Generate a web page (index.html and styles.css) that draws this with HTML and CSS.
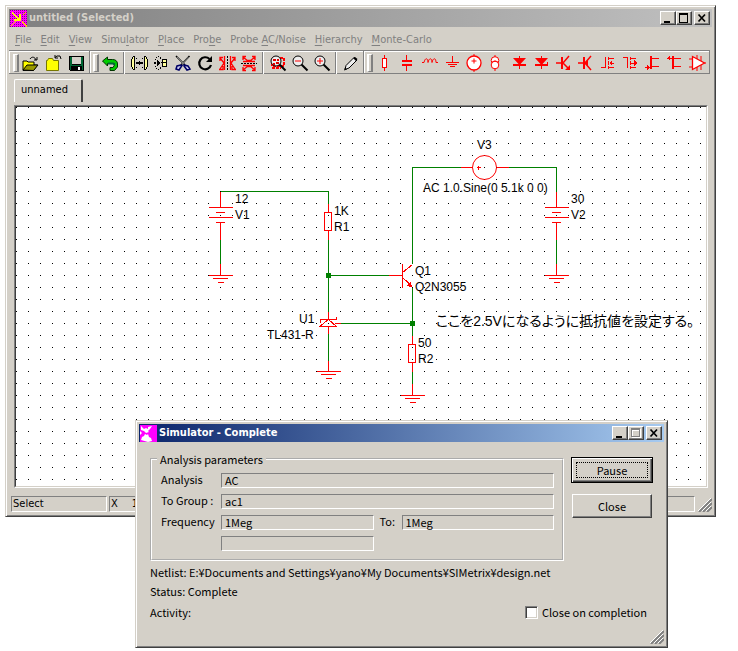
FILE: index.html
```html
<!DOCTYPE html>
<html lang="en">
<head>
<meta charset="utf-8">
<title>untitled (Selected)</title>
<link rel="stylesheet" href="styles.css">
</head>
<body>
<div class="desktop">
<main class="window">
  <header class="titlebar inactive">
    <svg class="app-icon" width="17" height="17" viewBox="0 0 17 17" shape-rendering="crispEdges">
      <defs><pattern id="weave" width="2" height="2" patternUnits="userSpaceOnUse"><rect width="2" height="2" fill="#f0f"/><rect width="1" height="1" fill="#808"/></pattern></defs>
      <rect width="17" height="17" fill="url(#weave)"/>
      <path d="M2 2h1v1h1v1h1v1h1v1h1v1h1v1h1V4h2v7H4V9h3V8H6V7H5V6H4V5H3V4H2z" fill="#ff0"/>
      <path d="M12 11h1v1h1v1h1v1h1v1h1v2h-1v-1h-1v-1h-1v-1h-1v-1h-1zM5 11h1v1H5zM4 12h1v1H4zM3 13h1v1H3zM2 14h1v1H2zM1 15h1v1H1zM13 4h1v1h-1zM14 3h1v1h-1zM15 2h1v1h-1z" fill="#fc0"/>
    </svg>
    <h1>untitled (Selected)</h1>
    <div class="caption-buttons">
      <button aria-label="Minimize"><svg width="12" height="10" shape-rendering="crispEdges"><path d="M2 8h6v2H2z"/></svg></button>
      <button aria-label="Maximize"><svg width="12" height="10" shape-rendering="crispEdges"><path d="M1 0h9v10H1zM2 2v7h7V2z" fill-rule="evenodd"/></svg></button>
      <button class="apart" aria-label="Close window"><svg width="12" height="10"><path d="M2.500 1.500l6.500 7M9 1.500l-6.500 7" stroke="#000" stroke-width="1.700"/></svg></button>
    </div>
  </header>
  <nav class="menubar">
    <button><u>F</u>ile</button><button><u>E</u>dit</button><button><u>V</u>iew</button><button>Simu<u>l</u>ator</button><button><u>P</u>lace</button><button>Pro<u>b</u>e</button><button>Probe <u>A</u>C/Noise</button><button><u>H</u>ierarchy</button><button><u>M</u>onte-Carlo</button>
  </nav>
  <div class="toolbar">
    <div class="band files">
      <span class="grip"></span>
      <button aria-label="Open"><svg viewBox="0 0 20 18"><path d="M3 16V7h4l1 1h6v3h3.500l-4 5.500H3z" fill="#ff0" stroke="#000"/><path d="M3 16l4-5h11l-4.500 5.500z" fill="#990" stroke="#000"/><path d="M10 5c2-3 5-2 6 1M14 6h3V3" fill="none" stroke="#000"/></svg></button>
      <button aria-label="Close schematic"><svg viewBox="0 0 20 18"><path d="M3.500 16.500v-10h1l1-2h4l1 2h5v10z" fill="#ff0" stroke="#770"/><path d="M12 3.500l2-1.500h3l1 3M12 1v3h3" fill="none" stroke="#000"/></svg></button>
      <button aria-label="Save"><svg viewBox="0 0 20 18" class="px"><path d="M3 2h15v15H4l-1-1z"/><path d="M4 3h2v8h9V3h2v13h-1v-4H5v4H4z" fill="#063"/><path d="M6 3h9v7H6z" fill="#d4d0c8"/><path d="M12 13h2v3h-2z" fill="#fff"/></svg></button>
    </div>
    <div class="band">
      <span class="grip"></span>
      <button aria-label="Undo"><svg viewBox="0 0 20 18"><path d="M2.500 7l5-4v2.500h5c3 0 5 1.500 5 4.500v3l-3 3.500H10v-3h3l1.500-2.500c0-1-1-1.500-2-1.500h-5V12z" fill="#0c0" stroke="#030"/><path d="M8 9.500h5l2 1" stroke="#063" fill="none" stroke-width="2"/></svg></button>
      <span class="rule"></span>
      <button aria-label="Mirror copy"><svg viewBox="0 0 20 18" class="px"><path d="M5.500 2.500h-1l-2 3v7l2 3h1zM15.500 2.500h1l2 3v7l-2 3h-1z" fill="#ff9" stroke="#000"/><path d="M7 4h1v1H7zM7 13h1v1H7zM13 4h1v1h-1zM13 13h1v1h-1zM7 8h2v2H7zM12 8h2v2h-2zM10 7h1v4h-1zM9 8h3v2H9z"/></svg></button>
      <button aria-label="Copy into"><svg viewBox="0 0 20 18" class="px"><path d="M3 8h2v2H3zM6 6h1v6H6zM7 7h1v4H7zM8 8h1v2H8zM7 2h1v1H7zM5 3h1v1H5zM4 5h1v1H4zM4 12h1v1H4zM5 14h1v1H5zM7 15h1v1H7zM9 3h1v2H9zM9 13h1v2H9z"/><path d="M11.500 5.500h4v7h-4z" fill="#ff9" stroke="#000"/><path d="M10 8h6v1h-6z"/></svg></button>
      <button aria-label="Cut"><svg viewBox="0 0 20 18"><path d="M3 2l9 9M16.500 2L8 11" stroke="#000" stroke-width="1.500"/><path d="M4 3l7 7M15.500 3L9 10" stroke="#fff" stroke-width=".5"/><path d="M8 11l-4 1-1 3 3 1 3-4.500zM11 11l4 1 2 3-3 1-3-4z" fill="#cce" stroke="#006" stroke-width="1.500"/></svg></button>
      <button aria-label="Rotate"><svg viewBox="0 0 20 18"><path d="M14.500 5A6 6 0 1 0 16 11" fill="none" stroke="#000" stroke-width="2.200"/><path d="M17 2v6h-6z"/></svg></button>
      <button aria-label="Flip horizontally"><svg viewBox="0 0 20 18"><path d="M10.500 2v15" stroke="#000" stroke-dasharray="2 1"/><path d="M7.500 2v14M13.500 2v14M7 9L3 4M7 9l-4 6M14 9l4-5M14 9l4 6M3 7V3.500h3M18 7V3.500h-3M2 15.500h4V12M19 15.500h-4V12" stroke="#f00" fill="none" stroke-width="1.300"/></svg></button>
      <button aria-label="Flip vertically"><svg viewBox="0 0 20 18"><path d="M2 9.500h16" stroke="#000" stroke-dasharray="2 1"/><path d="M4 7.500h12M4 11.500h12M8 6.500h5M8 12.500h5M9 7L4 3M11 7l5-4M9 12l-5 4M11 12l5 4M4 6V2.500h3M16 6V2.500h-3M4 13v3.500h3M16 13v3.500h-3" stroke="#f00" fill="none" stroke-width="1.300"/></svg></button>
      <span class="rule"></span>
      <button aria-label="Zoom to fit"><svg viewBox="0 0 20 18"><path d="M4 4h12v8H4z" fill="none" stroke="#f00" stroke-width="2" stroke-dasharray="3 1"/><circle cx="8" cy="7" r="5" fill="#eee" stroke="#000"/><path d="M5 5h3v2H5zM9 5h2v2H9zM5 9h2v2H5zM8 8h3v2H8z" fill="#d00"/><path d="M11.500 10.500l6 6" stroke="#000" stroke-width="2"/><path d="M4 14h9" stroke="#f00" stroke-width="2" stroke-dasharray="3 1"/></svg></button>
      <button aria-label="Zoom out"><svg viewBox="0 0 20 18"><circle cx="8" cy="7" r="5" fill="#eee" stroke="#000"/><path d="M5 7h6" stroke="#f00"/><path d="M11.500 10.500l6 6" stroke="#000" stroke-width="2"/></svg></button>
      <button aria-label="Zoom in"><svg viewBox="0 0 20 18"><circle cx="8" cy="7" r="5" fill="#eee" stroke="#000"/><path d="M5 7h6M8 4v6" stroke="#f00"/><path d="M11.500 10.500l6 6" stroke="#000" stroke-width="2"/></svg></button>
      <span class="rule"></span>
      <button aria-label="Draw wire"><svg viewBox="0 0 20 18"><path d="M4 15.500l1-4 8-8 3 2.500-8 8z" fill="#eee" stroke="#000"/><path d="M12 4l3 3 1.500-2-2.500-2zM3 16.500l1-3 2 2z"/></svg></button>
    </div>
    <div class="band parts">
      <span class="grip"></span>
      <button aria-label="Resistor"><svg viewBox="0 0 20 18" class="px"><path d="M10.500 1v3M10.500 14v3" stroke="#f00"/><path d="M8.500 4.500h4v9h-4z" fill="#fff" stroke="#f00"/></svg></button>
      <button aria-label="Capacitor"><svg viewBox="0 0 20 18" class="px"><path d="M10 1h1v5h5v2H6V6h4zM6 10h10v2h-5v5h-1v-5H6z" fill="#f00"/></svg></button>
      <span class="space"></span>
      <button aria-label="Inductor"><svg viewBox="0 0 20 18"><path d="M2 8.500h2c1-5 4-5 4 0 1-5 4-5 4 0 1-5 4-5 4 0h2" fill="none" stroke="#f00"/></svg></button>
      <button aria-label="Ground"><svg viewBox="0 0 20 18" class="px"><path d="M10 2h1v6h6v1H4V8h6zM6 10h9v1H6zM8 12h5v1H8z" fill="#f00"/></svg></button>
      <button aria-label="Voltage source"><svg viewBox="0 0 20 18"><circle cx="10" cy="9" r="7" fill="#fff" stroke="#f00" stroke-width="1.300"/><path d="M7.500 7h5M10 4.500v5M10 0v2M10 16v2" stroke="#f00"/></svg></button>
      <button aria-label="Current source"><svg viewBox="0 0 20 18"><path d="M9 1v16" stroke="#f00"/><circle cx="9" cy="6.500" r="3.800" fill="#fff" stroke="#f00"/><circle cx="9" cy="11" r="3.800" fill="#fff" stroke="#f00"/><path d="M6 8.500c2-2 4-2 6 0" stroke="#f00" fill="none"/></svg></button>
      <span class="space"></span>
      <button aria-label="Diode"><svg viewBox="0 0 20 18"><path d="M3 4h13l-5.500 6H16v2H3v-2h5.500z" fill="#f00"/><path d="M9.500 2v13" stroke="#f00"/></svg></button>
      <button aria-label="Zener diode"><svg viewBox="0 0 20 18"><path d="M3 4h13l-5.500 6H15V8h1v4H3v-2h5.500z" fill="#f00"/><path d="M9.500 2v13" stroke="#f00"/></svg></button>
      <button aria-label="NPN transistor"><svg viewBox="0 0 20 18"><path d="M2 9h6M9 9l6-7M9 9l6 6" stroke="#f00" stroke-width="1.500"/><path d="M7 3h2v12H7zM16 16h-5l5-5z" fill="#f00"/></svg></button>
      <button aria-label="PNP transistor"><svg viewBox="0 0 20 18"><path d="M2 9h6M9 9l6-7M9 9l6 7" stroke="#f00" stroke-width="1.500"/><path d="M7 3h2v12H7zM8 9l4-3v6z" fill="#f00"/></svg></button>
      <button aria-label="N MOSFET"><svg viewBox="0 0 20 18" class="px"><path d="M7.500 3v11M3 13.500h5M10.500 3v3M10.500 7v4M10.500 12v3M11 4.500h5M11 13.500h5M12 9h4" fill="none" stroke="#f00"/><path d="M11 9l3-3v6z" fill="#f00"/></svg></button>
      <button aria-label="P MOSFET"><svg viewBox="0 0 20 18" class="px"><path d="M7.500 3v11M3 3.500h5M10.500 3v3M10.500 7v4M10.500 12v3M11 4.500h5M11 13.500h5M10 9h5" fill="none" stroke="#f00"/><path d="M17 9l-3-3v6z" fill="#f00"/></svg></button>
      <button aria-label="N JFET"><svg viewBox="0 0 20 18" class="px"><path d="M8 2h2v13H8zM10 4h7v1h-7zM10 12h7v1h-7zM3 13h5v1H3zM5 11l3 2.500-3 2.500z" fill="#f00"/></svg></button>
      <button aria-label="P JFET"><svg viewBox="0 0 20 18" class="px"><path d="M8 2h2v13H8zM10 4h7v1h-7zM10 12h7v1h-7zM3 4h5v1H3zM3 4l3-3v6z" fill="#f00"/></svg></button>
      <span class="space"></span>
      <button aria-label="Amplifier"><svg viewBox="0 0 20 18"><path d="M1 5h4M1 13h4M9 1v16M13 2v14M15 9h3" stroke="#f00"/><path d="M4.500 2.500L16.500 9 4.500 15.500z" fill="#fff" stroke="#f00" stroke-width="1.300"/></svg></button>
    </div>
  </div>
  <div class="tabs"><button class="tab">unnamed</button></div>
  <div class="sheet">
    <svg class="schematic" width="100%" height="100%">
      <defs>
        <pattern id="grid" width="12" height="12" patternUnits="userSpaceOnUse"><rect width="1" height="1"/></pattern>
        <g id="ground"><path d="M-12 0H12M-8 3H7M-3 7H3"/></g>
        <g id="battery"><path d="M0-16V0M-12 0H12M-5 5H4M-12 10H12M-5 15H4M0 15V32M0 56V68"/><use href="#ground" y="68"/></g>
        <g id="resistor"><path d="M0-9V0M-4 0H3V18H-4zM0 18V27"/></g>
      </defs>
      <rect width="100%" height="100%" fill="url(#grid)"/>
      <g transform="translate(-15.500 -106.500)" fill="none" shape-rendering="crispEdges">
        <g class="wire">
          <path d="M220 191H328V203M220 239V263M328 239V311M328 275H388M340 323H412M328 333V360M412 263V167H460M508 167H556V191M556 239V263M412 287V335M412 371V383"/>
          <path class="node" d="M326 273h4v4h-4zM410 321h4v4h-4z"/>
        </g>
        <g class="part">
          <use href="#battery" x="220" y="207"/>
          <use href="#battery" x="556" y="207"/>
          <use href="#resistor" x="328" y="212"/>
          <use href="#resistor" x="412" y="344"/>
          <path d="M328 311V319M320 322V319H336V316M328 319L319 326H336zM334 323H340M328 326V333M328 360V371"/>
          <use href="#ground" x="328" y="371"/>
          <path d="M412 383V395"/>
          <use href="#ground" x="412" y="395"/>
          <path d="M388 275H402M402 263V287M402 272L412 264M402 277L412 286"/>
          <path class="tip" d="M411 286l-4-1 3-3z"/>
          <path d="M460 167H472M496 167H508M476 167H480M478 165V169"/>
          <circle cx="484" cy="167" r="12" shape-rendering="auto"/>
        </g>
      </g>
      <g class="names" transform="translate(-16 -107)">
        <text x="235" y="203">12</text><text x="235" y="219">V1</text>
        <text x="334" y="215">1K</text><text x="334" y="231">R1</text>
        <text x="477" y="149">V3</text><text x="423" y="192">AC 1.0.Sine(0 5.1k 0 0)</text>
        <text x="571" y="203">30</text><text x="571" y="219">V2</text>
        <text x="415" y="275">Q1</text><text x="415" y="291">Q2N3055</text>
        <text x="299" y="323">U1</text><text x="267" y="339">TL431-R</text>
        <text x="418" y="347">50</text><text x="418" y="363">R2</text>
        <text class="note" lang="ja" x="436" y="326">ここを2.5Vになるように抵抗値を設定する。</text>
      </g>
    </svg>
  </div>
  <footer class="status">
    <span class="mode">Select</span><span class="coords"><span>X</span><span>1</span></span>
    <svg class="sizer" width="14" height="14"><path d="M1 14L14 1M5 14l9-9M9 14l5-5" stroke="#808080" stroke-width="2"/><path d="M0 13L13 0M4 13l9-9M8 13l5-5" stroke="#fff"/></svg>
  </footer>
</main>

<section class="window dialog" role="dialog" aria-labelledby="dialog-title">
  <header class="titlebar active">
    <svg class="app-icon" width="17" height="17" viewBox="0 0 17 17"><path d="M0 0h17v17H0z" fill="#f0f"/><path d="M1 1l3 3 2-1 2 1V2l4-1-2 3-2 2 1 1-3 1-2-2-3-1zM0 6l2 2-2 2zM1 15l1-3 2-1 1-2 2 1 1-1 1 3 2 1 1 3-4 1z" fill="#fff"/></svg>
    <h2 id="dialog-title">Simulator - Complete</h2>
    <div class="caption-buttons">
      <button aria-label="Minimize"><svg width="12" height="10" shape-rendering="crispEdges"><path d="M2 8h6v2H2z"/></svg></button>
      <button aria-label="Maximize" disabled><svg width="12" height="10" shape-rendering="crispEdges"><path d="M2 1h9v9H2zM3 3v6h7V3z" fill="#fff" fill-rule="evenodd"/><path d="M1 0h9v9H1zM2 2v6h7V2z" fill="#808080" fill-rule="evenodd"/></svg></button>
      <button class="apart" aria-label="Close window"><svg width="12" height="10"><path d="M2.500 1.500l6.500 7M9 1.500l-6.500 7" stroke="#000" stroke-width="1.700"/></svg></button>
    </div>
  </header>
  <form class="panel">
    <fieldset>
      <legend>Analysis parameters</legend>
      <div class="fields">
        <label for="analysis">Analysis</label><output class="wide" id="analysis">AC</output>
        <label for="group">To Group :</label><output class="wide" id="group">ac1</output>
        <label for="from">Frequency</label><output id="from">1Meg</output>
        <label for="to">To:</label><output id="to">1Meg</output>
        <output class="extra"></output>
      </div>
    </fieldset>
    <div class="actions">
      <button type="button" class="push default"><span>Pause</span></button>
      <button type="button" class="push">Close</button>
    </div>
    <div class="report">
      <p>Netlist: E:¥Documents and Settings¥yano¥My Documents¥SIMetrix¥design.net</p>
      <p>Status: Complete</p>
      <div class="last"><span>Activity:</span><label class="check"><input type="checkbox">Close on completion</label></div>
    </div>
  </form>
  <svg class="sizer corner" width="14" height="14"><path d="M1 14L14 1M5 14l9-9M9 14l5-5" stroke="#808080" stroke-width="2"/><path d="M0 13L13 0M4 13l9-9M8 13l5-5" stroke="#fff"/></svg>
</section>
</div>
</body>
</html>
```
FILE: styles.css
```css
* { box-sizing: border-box; }
body { margin: 0; background: #fff; color: #000; }
button, input { font: inherit; color: inherit; padding: 0; margin: 0; }
button { border: 0; background: none; }
h1, h2, p { margin: 0; }

.desktop {
  position: relative;
  min-height: 100vh;
  padding: 5px 22px 0 5px;
  font: 11px/14px "DejaVu Sans Condensed", "DejaVu Sans", sans-serif;
}
.window {
  background: #d4d0c8;
  border: 1px solid;
  border-color: #d4d0c8 #404040 #404040 #d4d0c8;
  box-shadow: inset 1px 1px #fff, inset -1px -1px #808080;
  padding: 3px;
}

.titlebar { display: flex; align-items: center; height: 18px; padding: 0 2px 0 1px; }
.titlebar h1, .titlebar h2 { flex: 1; margin-left: 2px; font: bold 11px/18px "DejaVu Sans Condensed", "DejaVu Sans", sans-serif; }
.inactive { background: linear-gradient(90deg, #808080, #c0c0c0); color: #d4d0c8; }
.active { background: linear-gradient(90deg, #0a246a, #a6caf0); color: #fff; }
.caption-buttons { display: flex; }
.caption-buttons button {
  width: 16px;
  height: 14px;
  padding: 1px;
  background: #d4d0c8;
  border: 1px solid;
  border-color: #fff #404040 #404040 #fff;
  box-shadow: inset -1px -1px #808080;
}
.caption-buttons svg { display: block; }
.caption-buttons .apart { margin-left: 2px; }

.menubar { display: flex; align-items: center; gap: 9px; height: 23px; padding: 2px 0 0 6px; color: #808080; }
.menubar u { text-underline-offset: 2px; }

.toolbar { display: flex; height: 24px; margin-right: 2px; border: 1px solid #808080; border-width: 1px 1px 1px 0; box-shadow: inset 0 1px #fff; }
.band { display: flex; align-items: center; padding: 1px 1px 0 3px; border-left: 1px solid #fff; }
.band + .band { border-left-color: #808080; box-shadow: inset 1px 0 #fff; }
.band button { width: 22px; height: 20px; flex: none; }
.band svg { display: block; width: 20px; height: 18px; margin: 0 1px; }
.files button { width: 23px; }
.band .px { shape-rendering: crispEdges; }
.parts { flex: 1; padding-left: 3px; }
.grip { width: 6px; height: 18px; border: 1px solid; border-color: #fff #808080 #808080 #fff; border-width: 1px 2px 1px 2px; }
.rule { width: 2px; height: 22px; margin: 0 3px 0 2px; border-left: 1px solid #808080; border-right: 1px solid #fff; }
.space { width: 2px; }

.tabs { display: flex; height: 31px; padding: 5px 0 0 5px; }
.tab {
  width: 69px;
  height: 23px;
  padding: 0 7px 3px 0;
  border-style: solid;
  border-width: 1px 2px 0 1px;
  border-color: #fff #404040 #fff #fff;
  border-radius: 2px 2px 0 0;
}
.sheet { height: 383px; margin: 0 4px 0 5px; background: #fff; border: 1px solid; border-color: #808080 #fff #fff #808080; }
.schematic { display: block; border: 1px solid; border-color: #404040 #d4d0c8 #d4d0c8 #404040; }
.wire { stroke: #008000; }
.wire .node { fill: #008000; }
.part { stroke: #f00; }
.part .tip { fill: #f00; }
.names { font: 12px "Liberation Sans", sans-serif; }
.names .note { font: 14px "Liberation Sans", "Noto Sans CJK JP", sans-serif; font-feature-settings: "palt"; }

.status { display: flex; gap: 2px; padding: 8px 0 1px 2px; }
.status > span { height: 16px; border: 1px solid; border-color: #808080 #fff #fff #808080; padding: 0 1px; }
.mode { width: 96px; }
.coords { display: flex; flex: 1; gap: 14px; margin-right: 1px; }
.sizer { flex: none; align-self: flex-end; }

.dialog {
  position: absolute;
  left: 135px;
  top: 420px;
  width: 533px;
  font: 11px/15px "Noto Sans CJK JP", sans-serif;
}
.panel { display: grid; grid-template-columns: 1fr 82px; column-gap: 7px; padding: 10px 11px 23px 11px; }
fieldset { min-width: 0; margin: 0; padding: 0 8px 8px 9px; border: 2px groove #fff; }
legend { padding: 0 3px; margin-left: -4px; line-height: 14px; }
.fields { display: grid; grid-template-columns: 60px 1fr 28px 1fr; gap: 6px 0; padding-top: 7px; }
.fields label { line-height: 13px; }
.fields label[for="to"] { padding-left: 6px; }
.fields output {
  height: 15px;
  padding: 0 3px;
  border: 1px solid;
  border-color: #808080 #fff #fff #808080;
  line-height: 12px;
}
.fields .wide { grid-column: 2 / -1; }
.fields .extra { grid-column: 2; }
.actions { display: flex; flex-direction: column; gap: 11px; padding-top: 5px; }
.push {
  height: 24px;
  margin: 0 1px;
  border: 1px solid;
  border-color: #fff #404040 #404040 #fff;
  box-shadow: inset -1px -1px #808080;
}
.default { height: 26px; margin: 0; padding: 4px; border: 1px solid #000; box-shadow: inset 1px 1px #fff, inset -1px -1px #404040, inset -2px -2px #808080; }
.default span { display: block; border: 1px dotted #000; line-height: 14px; }
.report { grid-column: 1 / -1; padding-top: 2px; }
.report p { line-height: 19px; }
.last { display: flex; justify-content: space-between; padding: 2px 6px 0 0; line-height: 18px; }
.check { display: flex; align-items: center; gap: 4px; }
.check input {
  appearance: none;
  width: 13px;
  height: 13px;
  background: #fff;
  border: 1px solid;
  border-color: #808080 #fff #fff #808080;
  box-shadow: inset 1px 1px #404040, inset -1px -1px #d4d0c8;
}
.corner { position: absolute; right: 3px; bottom: 3px; }
```
